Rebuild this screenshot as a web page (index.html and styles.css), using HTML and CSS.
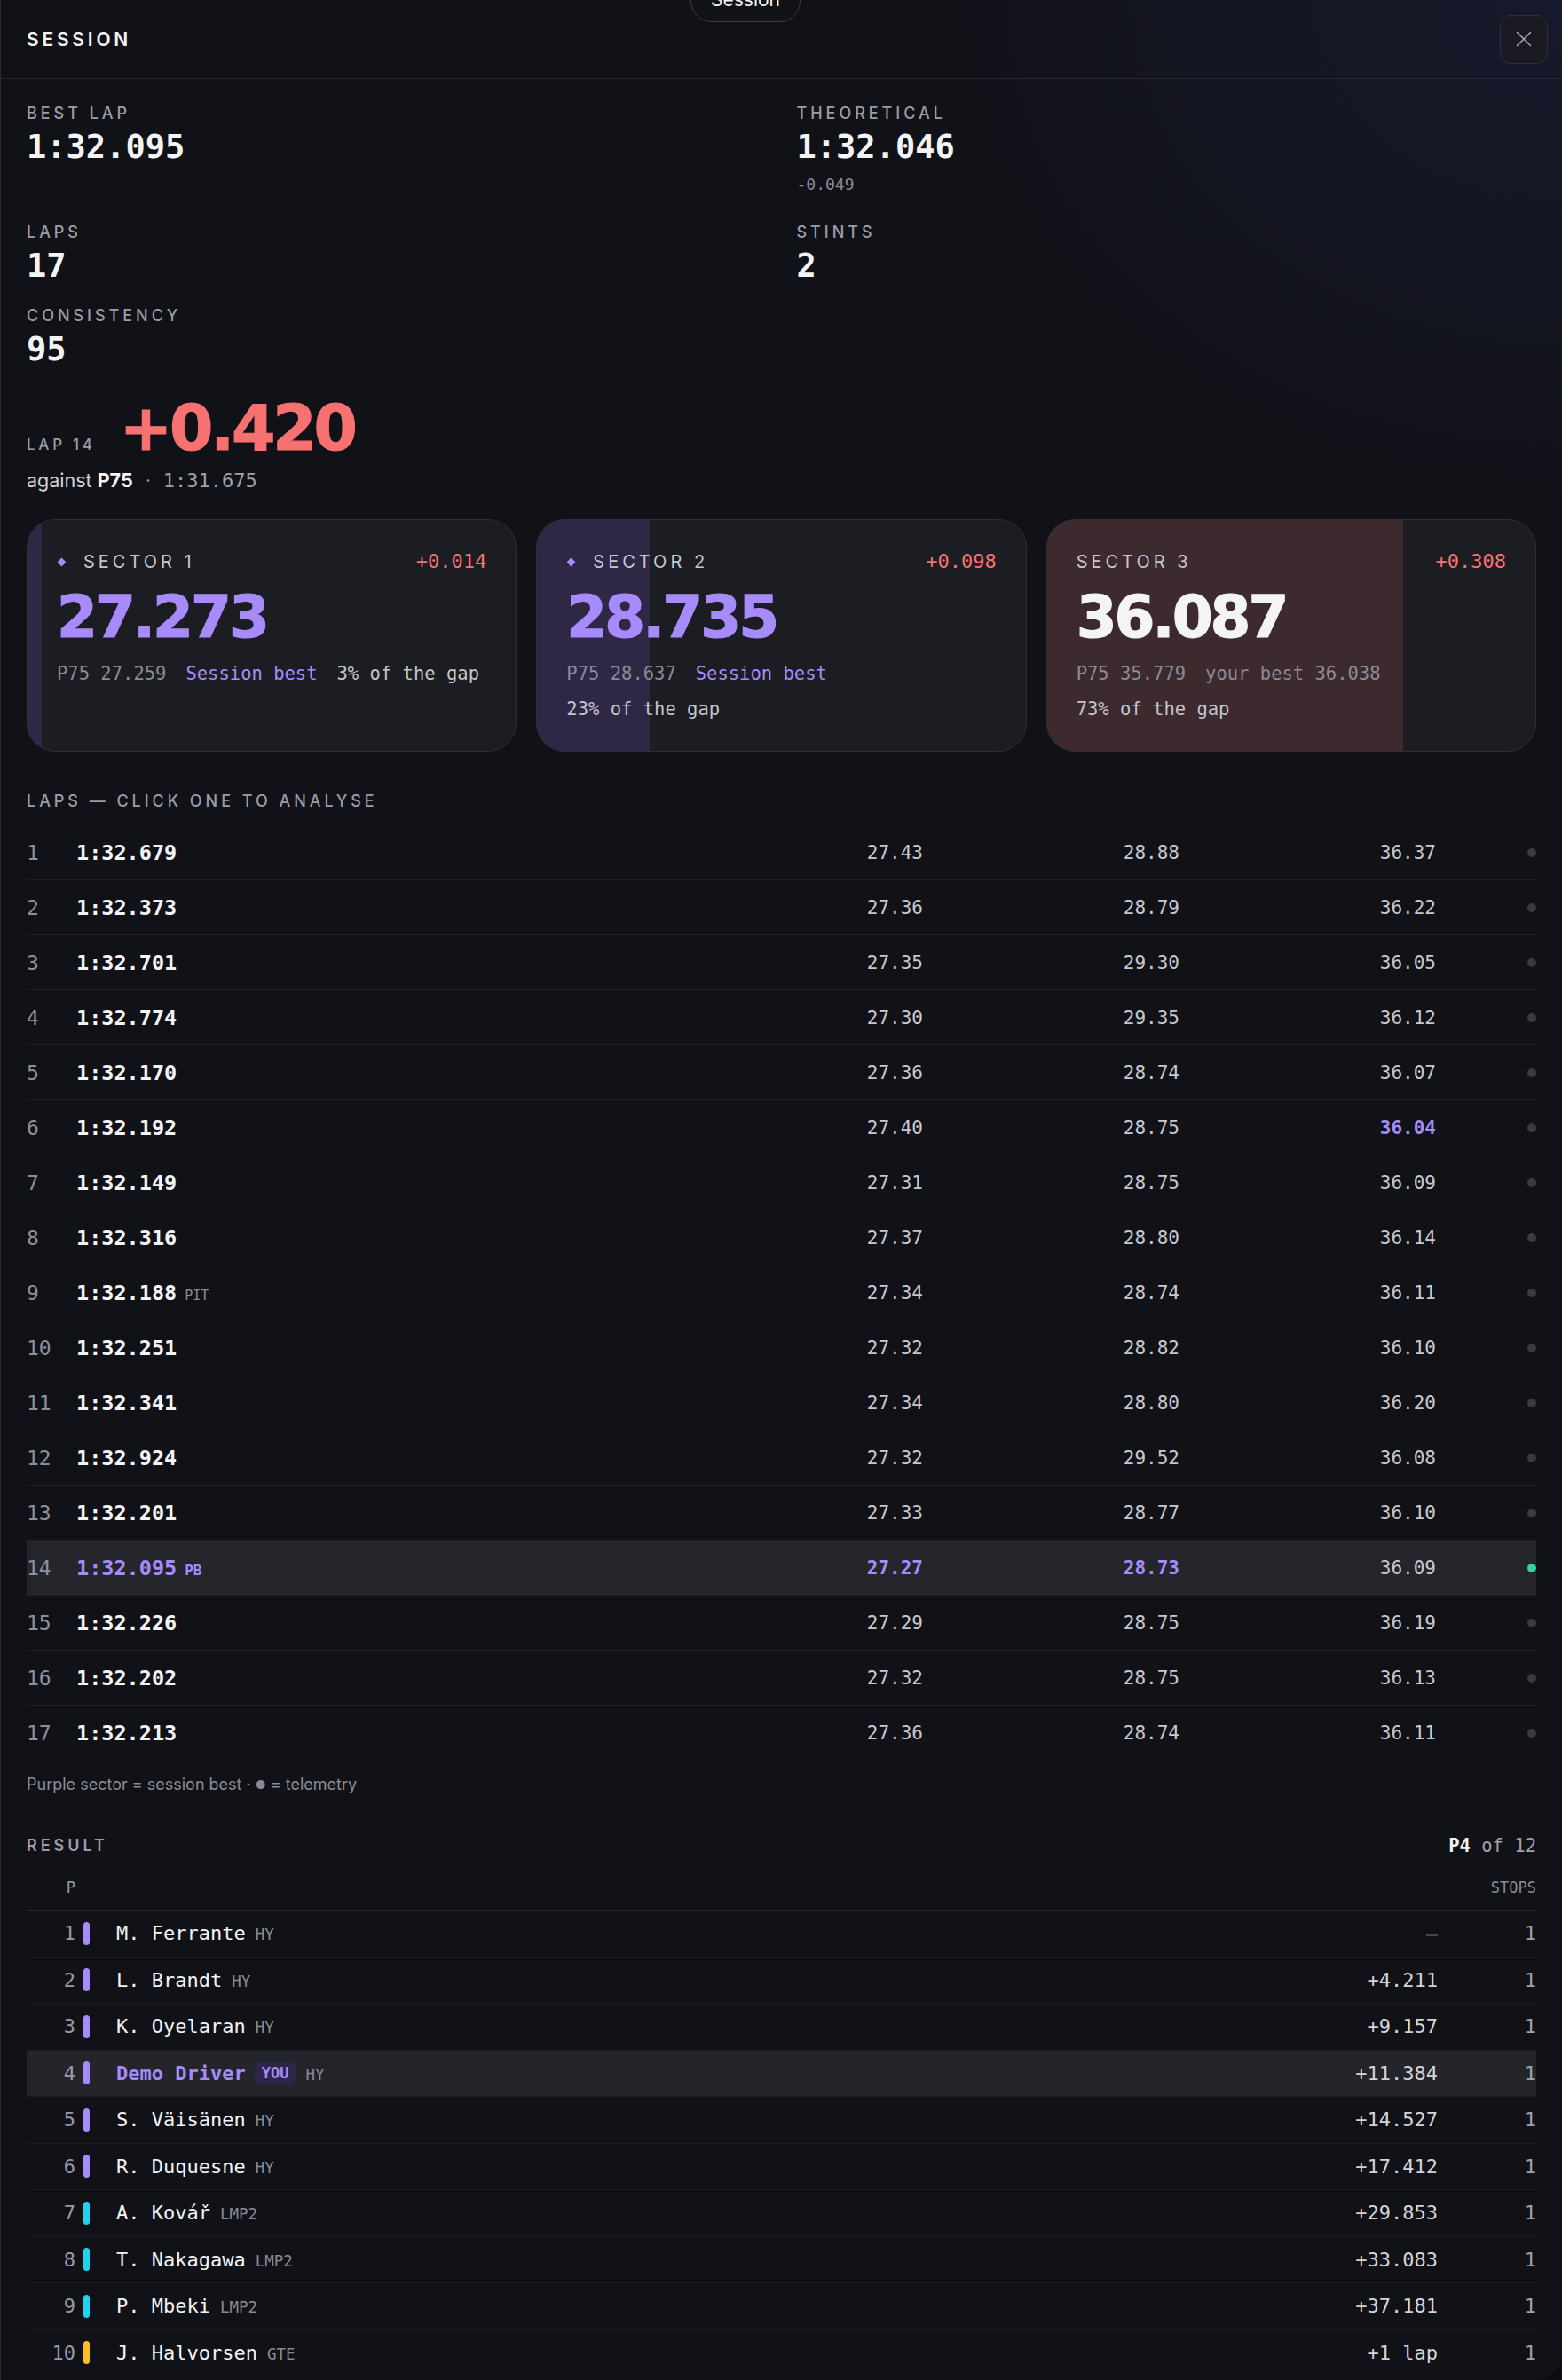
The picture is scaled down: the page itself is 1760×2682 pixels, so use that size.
FILE: index.html
```html
<!DOCTYPE html>
<html lang="en">
<head>
  <meta charset="UTF-8" />
  <meta name="viewport" content="width=device-width, initial-scale=1.0"/>
  <title>Session</title>
  <link rel="stylesheet" href="styles.css">
</head>
<body>
  <div class="panel">
    <div class="tab-pill">Session</div>

    <header class="panel-head">
      <div class="panel-title">SESSION</div>
      <button class="close-btn" aria-label="Close">
        <svg width="20" height="20" viewBox="0 0 20 20" fill="none" stroke="#a9a9b3" stroke-width="1.5" stroke-linecap="round">
          <path d="M2.5 2.5 L17.5 17.5 M17.5 2.5 L2.5 17.5"/>
        </svg>
      </button>
    </header>

    <div class="content">
      <div class="stats">
        <div class="stat">
          <div class="label">Best lap</div>
          <div class="stat-value">1:32.095</div>
        </div>
        <div class="stat">
          <div class="label">Theoretical</div>
          <div class="stat-value">1:32.046</div>
          <div class="stat-sub">-0.049</div>
        </div>
        <div class="stat">
          <div class="label">Laps</div>
          <div class="stat-value">17</div>
        </div>
        <div class="stat">
          <div class="label">Stints</div>
          <div class="stat-value">2</div>
        </div>
        <div class="stat">
          <div class="label">Consistency</div>
          <div class="stat-value">95</div>
        </div>
      </div>

      <div class="delta">
        <span class="label">Lap 14</span>
        <span class="delta-num">+0.420</span>
      </div>
      <div class="against">against <b>P75</b><span class="sep">·</span><span class="mono">1:31.675</span></div>

      <div class="sectors">
        <div class="sector fill-purple" style="--share: 3%">
          <div class="sector-head">
            <span class="sector-name"><i class="diamond"></i>SECTOR 1</span>
            <span class="sector-delta">+0.014</span>
          </div>
          <div class="sector-time best">27.273</div>
          <div class="sector-notes">
            <span>P75 27.259</span>
            <span class="purple">Session best</span>
            <span class="light">3% of the gap</span>
          </div>
        </div>
        <div class="sector fill-purple" style="--share: 23%">
          <div class="sector-head">
            <span class="sector-name"><i class="diamond"></i>SECTOR 2</span>
            <span class="sector-delta">+0.098</span>
          </div>
          <div class="sector-time best">28.735</div>
          <div class="sector-notes">
            <span>P75 28.637</span>
            <span class="purple">Session best</span>
            <span class="light">23% of the gap</span>
          </div>
        </div>
        <div class="sector fill-red" style="--share: 73%">
          <div class="sector-head">
            <span class="sector-name">SECTOR 3</span>
            <span class="sector-delta">+0.308</span>
          </div>
          <div class="sector-time">36.087</div>
          <div class="sector-notes">
            <span>P75 35.779</span>
            <span>your best 36.038</span>
            <span class="light">73% of the gap</span>
          </div>
        </div>
      </div>

      <div class="label laps-label">Laps — click one to analyse</div>
      <div class="laps">
        <div class="lap"><span class="lap-n">1</span><span class="lap-t">1:32.679</span><span class="s">27.43</span><span class="s">28.88</span><span class="s">36.37</span><i class="dot"></i></div>
        <div class="lap"><span class="lap-n">2</span><span class="lap-t">1:32.373</span><span class="s">27.36</span><span class="s">28.79</span><span class="s">36.22</span><i class="dot"></i></div>
        <div class="lap"><span class="lap-n">3</span><span class="lap-t">1:32.701</span><span class="s">27.35</span><span class="s">29.30</span><span class="s">36.05</span><i class="dot"></i></div>
        <div class="lap"><span class="lap-n">4</span><span class="lap-t">1:32.774</span><span class="s">27.30</span><span class="s">29.35</span><span class="s">36.12</span><i class="dot"></i></div>
        <div class="lap"><span class="lap-n">5</span><span class="lap-t">1:32.170</span><span class="s">27.36</span><span class="s">28.74</span><span class="s">36.07</span><i class="dot"></i></div>
        <div class="lap"><span class="lap-n">6</span><span class="lap-t">1:32.192</span><span class="s">27.40</span><span class="s">28.75</span><span class="s best">36.04</span><i class="dot"></i></div>
        <div class="lap"><span class="lap-n">7</span><span class="lap-t">1:32.149</span><span class="s">27.31</span><span class="s">28.75</span><span class="s">36.09</span><i class="dot"></i></div>
        <div class="lap"><span class="lap-n">8</span><span class="lap-t">1:32.316</span><span class="s">27.37</span><span class="s">28.80</span><span class="s">36.14</span><i class="dot"></i></div>
        <div class="lap"><span class="lap-n">9</span><span class="lap-t">1:32.188<small class="tag">PIT</small></span><span class="s">27.34</span><span class="s">28.74</span><span class="s">36.11</span><i class="dot"></i></div>
        <div class="lap"><span class="lap-n">10</span><span class="lap-t">1:32.251</span><span class="s">27.32</span><span class="s">28.82</span><span class="s">36.10</span><i class="dot"></i></div>
        <div class="lap"><span class="lap-n">11</span><span class="lap-t">1:32.341</span><span class="s">27.34</span><span class="s">28.80</span><span class="s">36.20</span><i class="dot"></i></div>
        <div class="lap"><span class="lap-n">12</span><span class="lap-t">1:32.924</span><span class="s">27.32</span><span class="s">29.52</span><span class="s">36.08</span><i class="dot"></i></div>
        <div class="lap"><span class="lap-n">13</span><span class="lap-t">1:32.201</span><span class="s">27.33</span><span class="s">28.77</span><span class="s">36.10</span><i class="dot"></i></div>
        <div class="lap current"><span class="lap-n">14</span><span class="lap-t">1:32.095<small class="tag pb">PB</small></span><span class="s best">27.27</span><span class="s best">28.73</span><span class="s">36.09</span><i class="dot on"></i></div>
        <div class="lap"><span class="lap-n">15</span><span class="lap-t">1:32.226</span><span class="s">27.29</span><span class="s">28.75</span><span class="s">36.19</span><i class="dot"></i></div>
        <div class="lap"><span class="lap-n">16</span><span class="lap-t">1:32.202</span><span class="s">27.32</span><span class="s">28.75</span><span class="s">36.13</span><i class="dot"></i></div>
        <div class="lap"><span class="lap-n">17</span><span class="lap-t">1:32.213</span><span class="s">27.36</span><span class="s">28.74</span><span class="s">36.11</span><i class="dot"></i></div>
      </div>
      <p class="caption">Purple sector = session best · <span class="bullet">●</span> = telemetry</p>

      <div class="result-head">
        <span class="label strong">Result</span>
        <span class="mono place"><b>P4</b> of 12</span>
      </div>
      <div class="res-head">
        <span class="r-pos">P</span>
        <span></span>
        <span></span>
        <span></span>
        <span class="r-stops">STOPS</span>
      </div>
      <div class="res-row"><span class="r-pos">1</span><i class="bar hy"></i><span class="r-name">M. Ferrante<small>HY</small></span><span class="r-gap">–</span><span class="r-stops">1</span></div>
      <div class="res-row"><span class="r-pos">2</span><i class="bar hy"></i><span class="r-name">L. Brandt<small>HY</small></span><span class="r-gap">+4.211</span><span class="r-stops">1</span></div>
      <div class="res-row"><span class="r-pos">3</span><i class="bar hy"></i><span class="r-name">K. Oyelaran<small>HY</small></span><span class="r-gap">+9.157</span><span class="r-stops">1</span></div>
      <div class="res-row me"><span class="r-pos">4</span><i class="bar hy"></i><span class="r-name">Demo Driver<em class="you">YOU</em><small>HY</small></span><span class="r-gap">+11.384</span><span class="r-stops">1</span></div>
      <div class="res-row"><span class="r-pos">5</span><i class="bar hy"></i><span class="r-name">S. Väisänen<small>HY</small></span><span class="r-gap">+14.527</span><span class="r-stops">1</span></div>
      <div class="res-row"><span class="r-pos">6</span><i class="bar hy"></i><span class="r-name">R. Duquesne<small>HY</small></span><span class="r-gap">+17.412</span><span class="r-stops">1</span></div>
      <div class="res-row"><span class="r-pos">7</span><i class="bar lmp"></i><span class="r-name">A. Kovář<small>LMP2</small></span><span class="r-gap">+29.853</span><span class="r-stops">1</span></div>
      <div class="res-row"><span class="r-pos">8</span><i class="bar lmp"></i><span class="r-name">T. Nakagawa<small>LMP2</small></span><span class="r-gap">+33.083</span><span class="r-stops">1</span></div>
      <div class="res-row"><span class="r-pos">9</span><i class="bar lmp"></i><span class="r-name">P. Mbeki<small>LMP2</small></span><span class="r-gap">+37.181</span><span class="r-stops">1</span></div>
      <div class="res-row"><span class="r-pos">10</span><i class="bar gte"></i><span class="r-name">J. Halvorsen<small>GTE</small></span><span class="r-gap">+1 lap</span><span class="r-stops">1</span></div>
    </div>
  </div>
</body>
</html>
```

FILE: styles.css
```css
* {
  box-sizing: border-box;
}

html, body {
  margin: 0;
  padding: 0;
}

body {
  background: #0c0d10;
  color: #f4f4f5;
  font-family: 'Inter', 'Liberation Sans', sans-serif;
}

.mono,
.stat-value,
.stat-sub,
.sector-delta,
.sector-notes,
.lap,
.place,
.res-head,
.res-row {
  font-family: 'DejaVu Sans Mono', 'Liberation Mono', monospace;
}

.panel {
  position: relative;
  width: 1760px;
  min-height: 2682px;
  border-left: 1px solid #2a2b31;
  border-bottom-right-radius: 30px;
  overflow: hidden;
  background:
    radial-gradient(ellipse 1000px 800px at 100% 0%, rgba(30, 34, 70, 0.45), transparent 75%),
    #111217;
}

/* tab peeking in from above */
.tab-pill {
  position: absolute;
  top: -24px;
  left: 777px;
  width: 124px;
  height: 49px;
  border: 1px solid #3b3c44;
  border-radius: 24px;
  background: #121317;
  color: #f4f4f5;
  font-size: 21px;
  line-height: 45px;
  text-align: center;
}

/* ======== HEADER ========= */
.panel-head {
  display: flex;
  align-items: center;
  justify-content: space-between;
  height: 89px;
  padding: 0 16px 0 29px;
  border-bottom: 1px solid #26272d;
}

.panel-title {
  font-size: 21px;
  font-weight: 600;
  letter-spacing: 0.18em;
}

.close-btn {
  display: flex;
  align-items: center;
  justify-content: center;
  width: 54px;
  height: 55px;
  padding: 0;
  border: 1px solid #2e2f37;
  border-radius: 12px;
  background: #1a1b22;
  cursor: pointer;
}

.content {
  padding: 27px 29px 0 29px;
}

.label {
  font-size: 18px;
  line-height: 24px;
  font-weight: 500;
  letter-spacing: 0.22em;
  text-transform: uppercase;
  color: #9d9da8;
}

.label.strong {
  font-weight: 600;
}

/* ======== STATS ========= */
.stats {
  display: grid;
  grid-template-columns: 1fr 1fr;
  column-gap: 34px;
  row-gap: 22px;
}

.stat-value {
  margin-top: 4px;
  font-size: 37px;
  line-height: 44px;
  font-weight: 700;
}

.stat-sub {
  margin: 6px 0;
  font-size: 18px;
  line-height: 28px;
  color: #8b8b95;
}

.delta {
  display: flex;
  align-items: baseline;
  gap: 27px;
  margin-top: 31px;
}

.delta .label {
  font-size: 17px;
}

.delta-num,
.sector-time {
  font-family: 'DejaVu Sans', 'Inter', sans-serif;
  font-weight: 700;
  line-height: 1;
  letter-spacing: -0.045em;
  -webkit-text-stroke: 1.2px currentColor;
}

.delta-num {
  font-size: 71px;
  color: #f87171;
}

.against {
  margin-top: 9px;
  font-size: 21.5px;
  line-height: 28px;
  color: #d4d4d8;
}

.against b {
  color: #f4f4f5;
  font-weight: 700;
}

.against .sep {
  margin: 0 14px;
  color: #8b8b95;
}

.against .mono {
  font-size: 22px;
  color: #a1a1aa;
}

/* ======== SECTOR CARDS ========= */
.sectors {
  display: grid;
  grid-template-columns: repeat(3, 1fr);
  gap: 22px;
  margin-top: 29px;
}

.sector {
  border: 1px solid #2f3037;
  border-radius: 32px;
  padding: 33px 33px 32px;
  --base: #1c1d22;
}

.fill-purple {
  background: linear-gradient(90deg, #2e2846 var(--share), var(--base) var(--share));
}

.fill-red {
  background: linear-gradient(90deg, #3c2a2f var(--share), var(--base) var(--share));
}

.sector-head {
  display: flex;
  align-items: center;
  justify-content: space-between;
  line-height: 28px;
}

.sector-name {
  display: flex;
  align-items: center;
  font-size: 20px;
  letter-spacing: 0.2em;
  color: #c7c7cf;
}

.diamond {
  width: 7px;
  height: 7px;
  margin: 0 21px 0 2px;
  background: #a78bfa;
  transform: rotate(45deg);
}

.sector-delta {
  font-size: 22px;
  font-weight: 500;
  color: #f87171;
}

.sector-time {
  margin-top: 16px;
  font-size: 66px;
  color: #f4f4f5;
}

.sector-time.best {
  color: #a78bfa;
}

.sector-notes {
  display: flex;
  flex-wrap: wrap;
  gap: 10px 22px;
  margin-top: 15px;
  font-size: 20.5px;
  line-height: 30px;
  color: #8b8b95;
}

.purple {
  color: #a78bfa;
}

.light {
  color: #c4c4cc;
}

/* ======== LAPS ========= */
.laps-label {
  margin-top: 44px;
}

.laps {
  margin-top: 15px;
}

.lap {
  display: grid;
  grid-template-columns: 56px 1fr 289px 289px 289px 113px;
  align-items: center;
  height: 62px;
  border-bottom: 1px solid #1f2026;
}

.lap:last-child {
  border-bottom: none;
}

.lap.current {
  background: #25262c;
}

.lap-n {
  font-size: 23px;
  color: #8f8f99;
}

.lap-t {
  font-size: 23.5px;
  font-weight: 700;
  color: #f4f4f5;
}

.lap.current .lap-t {
  color: #a78bfa;
}

.tag {
  margin-left: 9px;
  font-size: 15px;
  font-weight: 400;
  color: #8b8b95;
}

.tag.pb {
  font-size: 16px;
  font-weight: 700;
  color: #a78bfa;
}

.s {
  text-align: right;
  font-size: 21px;
  color: #c8c8d0;
}

.s.best {
  font-weight: 700;
  color: #a78bfa;
}

.dot {
  justify-self: end;
  width: 10px;
  height: 10px;
  border-radius: 50%;
  background: #3a3b42;
}

.dot.on {
  background: #34d399;
}

.caption {
  margin: 15px 0 0;
  font-size: 18px;
  line-height: 24px;
  color: #8b8b95;
}

.bullet {
  font-size: 13px;
  vertical-align: 1px;
}

/* ======== RESULT ========= */
.result-head {
  display: flex;
  align-items: center;
  justify-content: space-between;
  margin-top: 45px;
}

.place {
  font-size: 20.5px;
  color: #a1a1aa;
}

.place b {
  color: #f4f4f5;
}

.res-head,
.res-row {
  display: grid;
  grid-template-columns: 55px 46px 1fr auto 111px;
  align-items: center;
}

.res-head {
  margin-top: 17px;
  padding: 6px 0 13px;
  line-height: 24px;
  font-size: 17px;
  color: #8b8b95;
  border-bottom: 1px solid #2a2b31;
}

.res-row {
  height: 52.5px;
  border-bottom: 1px solid #1c1d23;
  font-size: 22px;
}

.res-row.me {
  background: #24252b;
}

.r-pos {
  text-align: right;
  color: #9a9aa4;
}

.r-stops {
  text-align: right;
}

.res-row .r-stops {
  color: #a1a1aa;
}

.bar {
  width: 7px;
  height: 26px;
  margin-left: 9px;
  border-radius: 4px;
}

.bar.hy {
  background: #a78bfa;
}

.bar.lmp {
  background: #22d3ee;
}

.bar.gte {
  background: #fbbf24;
}

.r-name {
  font-weight: 500;
  color: #f4f4f5;
}

.r-name small {
  margin-left: 11px;
  font-size: 17.5px;
  color: #8b8b95;
}

.res-row.me .r-name {
  font-weight: 700;
  color: #a78bfa;
}

.you {
  display: inline-block;
  margin-left: 10px;
  padding: 0 8px;
  border-radius: 6px;
  background: #2e2649;
  font-style: normal;
  font-size: 17px;
  line-height: 24px;
  font-weight: 700;
  color: #a78bfa;
  vertical-align: 2px;
}

.res-row.me .you + small {
  font-weight: 400;
}

.r-gap {
  text-align: right;
  color: #d4d4d8;
}
```
